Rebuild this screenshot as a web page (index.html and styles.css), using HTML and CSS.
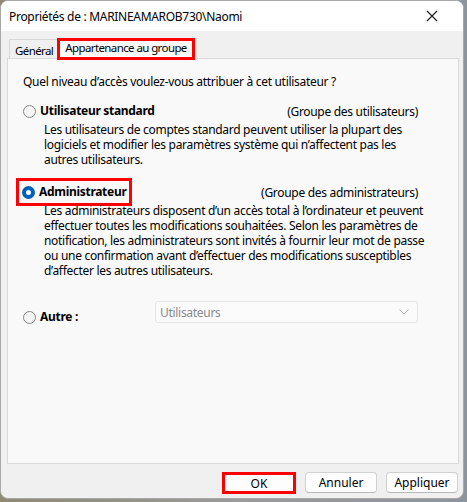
FILE: index.html
```html
<!DOCTYPE html>
<html lang="fr">
<head>
<meta charset="utf-8">
<title>Propriétés</title>
<link rel="stylesheet" href="styles.css">
</head>
<body>
<div class="window">
  <div class="titlebar">
    <span class="title">Propriétés de : MARINEAMAROB730\Naomi</span>
    <svg class="close" width="12" height="12" viewBox="0 0 12 12"><path d="M1 1L11 11M11 1L1 11" stroke="#1a1a1a" stroke-width="1.1" fill="none"/></svg>
  </div>
  <div class="content">
    <div class="tabs">
      <div class="tab">Général</div>
      <div class="tab tab-active marked">Appartenance au groupe</div>
    </div>
    <div class="panel">
      <p class="question">Quel niveau d’accès voulez-vous attribuer à cet utilisateur ?</p>

      <div class="option">
        <div class="option-head">
          <span class="radio-label"><span class="radio"></span><b>Utilisateur standard</b></span>
          <span class="group">(Groupe des utilisateurs)</span>
        </div>
        <p class="desc">Les utilisateurs de comptes standard peuvent utiliser la plupart des<br>logiciels et modifier les paramètres système qui n’affectent pas les<br>autres utilisateurs.</p>
      </div>

      <div class="option option-admin">
        <div class="option-head">
          <span class="radio-label marked admin-mark"><span class="radio checked"></span><b>Administrateur</b></span>
          <span class="group">(Groupe des administrateurs)</span>
        </div>
        <p class="desc">Les administrateurs disposent d’un accès total à l’ordinateur et peuvent<br>effectuer toutes les modifications souhaitées. Selon les paramètres de<br>notification, les administrateurs sont invités à fournir leur mot de passe<br>ou une confirmation avant d’effectuer des modifications susceptibles<br>d’affecter les autres utilisateurs.</p>
      </div>

      <div class="other">
        <span class="radio-label other-label"><span class="radio"></span><b>Autre :</b></span>
        <div class="select">
          <span>Utilisateurs</span>
          <svg width="10" height="6" viewBox="0 0 10 6"><path d="M0.5 0.5L5 5L9.5 0.5" stroke="#b5b5b5" stroke-width="1" fill="none"/></svg>
        </div>
      </div>
    </div>
  </div>
  <div class="footer">
    <button class="btn marked">OK</button>
    <button class="btn">Annuler</button>
    <button class="btn">Appliquer</button>
  </div>
</div>
</body>
</html>
```
FILE: styles.css
```css
* { box-sizing: border-box; }

html, body {
  margin: 0;
  height: 100%;
}

body {
  background: linear-gradient(90deg, #8d8a74 0%, #9a9a9a 50%, #8e949c 100%);
  font-family: "Noto Sans", "Open Sans", sans-serif;
  font-size: 12px;
  letter-spacing: -0.3px;
  color: #000;
}

.window {
  width: 464px;
  height: 499px;
  background: #f0f0f0;
  border: 1px solid #a8a8a8;
  border-radius: 8px;
  overflow: hidden;
  display: flex;
  flex-direction: column;
}

.titlebar {
  height: 30px;
  background: #fff;
  display: flex;
  align-items: center;
  justify-content: space-between;
  padding: 0 25px 0 8px;
}

.title { font-size: 12px; }

.content {
  padding: 7px 4px 0 6px;
}

.tabs {
  display: flex;
  align-items: flex-end;
  height: 20px;
  padding-left: 2px;
  font-size: 11.5px;
  letter-spacing: -0.6px;
}

.tab {
  height: 19px;
  padding: 2px 5px 0;
  border: 1px solid #d9d9d9;
  border-bottom: none;
  line-height: 17px;
  background: #f0f0f0;
}

.tab + .tab { margin-left: -1px; }

.tab-active {
  height: 20px;
  padding: 0 6px;
  line-height: 16px;
  background: #f9f9f9;
  position: relative;
  top: 1px;
  z-index: 1;
}

.marked {
  outline: 3px solid #f00;
  outline-offset: -2px;
}

.panel {
  height: 406px;
  background: #f9f9f9;
  border: 1px solid #d9d9d9;
  padding: 15px 40px 0 15px;
}

.question {
  margin: 0 0 13px;
  line-height: 16px;
}

.option-head {
  display: flex;
  justify-content: space-between;
  align-items: center;
  height: 16px;
}

.radio-label {
  display: inline-flex;
  align-items: center;
  gap: 4px;
  line-height: 16px;
}

.radio-label b { font-weight: 700; }

.radio {
  width: 13px;
  height: 13px;
  border-radius: 50%;
  border: 1px solid #858585;
  background: #f5f5f5;
  flex: none;
}

.radio.checked {
  border: 4px solid #005fb8;
  background: #fff;
}

.desc {
  margin: 3px -10px 0 21px;
  line-height: 15px;
  white-space: nowrap;
}

.option-admin { margin-top: 17px; }

.admin-mark {
  padding: 5px 5px 5px 5px;
  margin-left: -6px;
}

.other {
  margin-top: 23px;
  display: flex;
  align-items: flex-start;
}

.other-label {
  width: 132px;
  margin-top: 8px;
}

.select {
  width: 263px;
  height: 22px;
  border: 1px solid #e5e5e5;
  border-radius: 3px;
  background: #fbfbfb;
  color: #8a8a8a;
  display: flex;
  align-items: center;
  justify-content: space-between;
  padding: 0 8px 0 4px;
}

.footer {
  display: flex;
  justify-content: flex-end;
  gap: 9px;
  padding: 8px 5px 0 0;
}

.btn {
  width: 72px;
  height: 21px;
  font: inherit;
  color: #000;
  background: #fdfdfd;
  border: 1px solid #d0d0d0;
  border-bottom-color: #b8b8b8;
  border-radius: 4px;
  padding: 0;
}

.btn.marked {
  width: 74px;
  height: 22px;
  border-radius: 0;
  outline-offset: -3px;
}
```
